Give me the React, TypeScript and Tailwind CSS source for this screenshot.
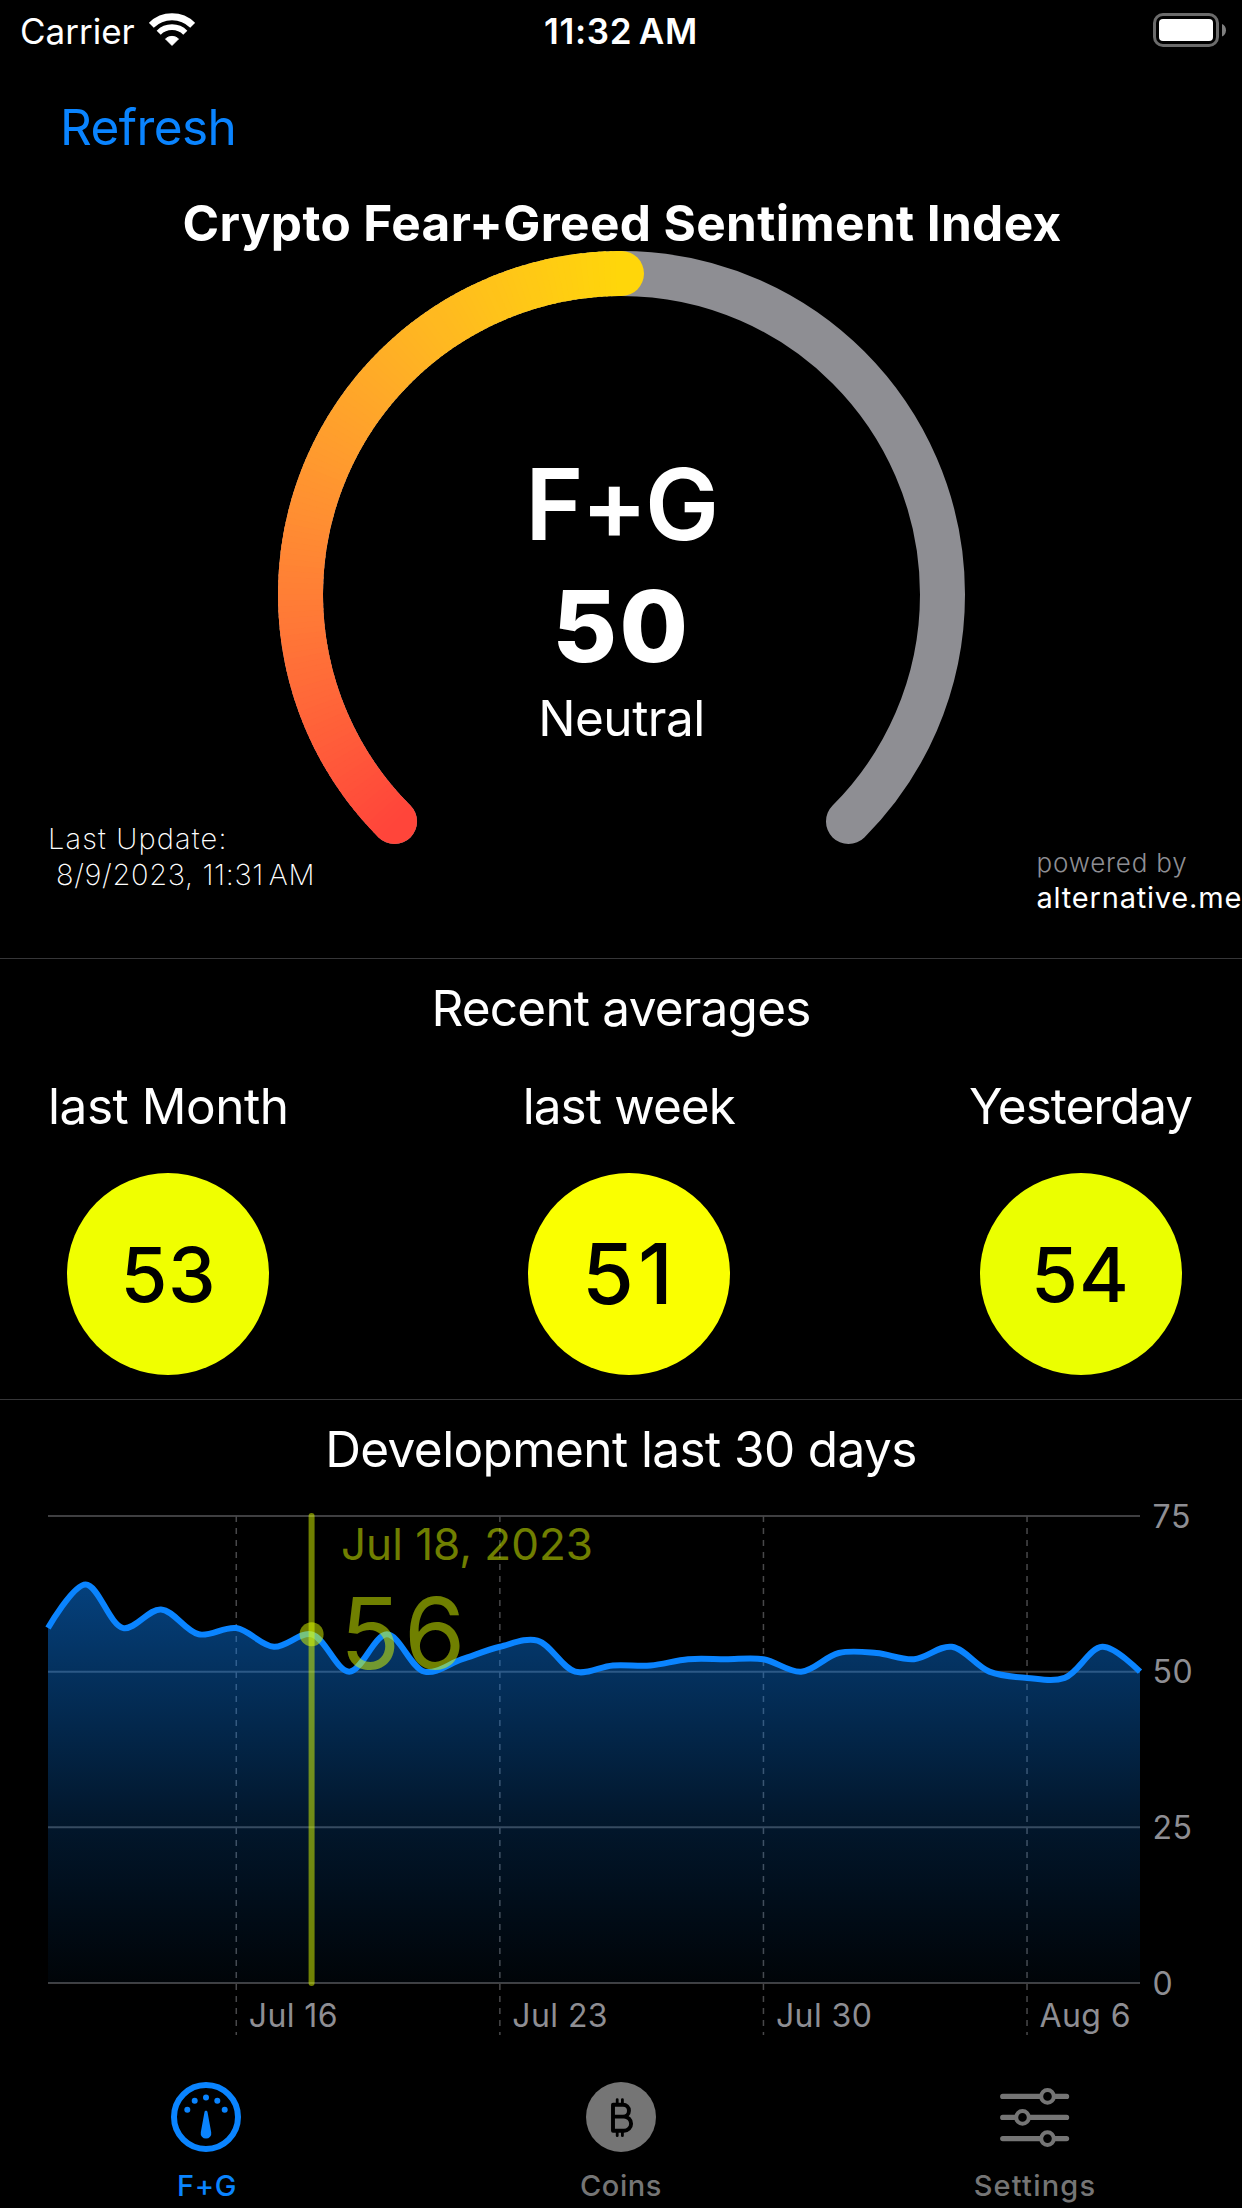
import type { ReactNode } from 'react';

const GAUGE_SIZE = 687;
const GAUGE_RADIUS = 321;
const GAUGE_START = 135;
const GAUGE_SWEEP = 270;

const history = [
    57, 64, 57, 60, 56, 57, 54, 56, 50, 56, 50, 52, 54, 55, 50, 51, 51, 52, 52, 52, 50, 53, 53, 52, 54, 50, 49, 49, 54, 50,
];

const CHART = { left: 48, right: 1140, top: 20, bottom: 487, max: 75 };

const weekTicks = [
    { index: 5, label: 'Jul 16' },
    { index: 12, label: 'Jul 23' },
    { index: 19, label: 'Jul 30' },
    { index: 26, label: 'Aug 6' },
];

const averages = [
    { label: 'last Month', value: 53, labelClass: 'tracking-[-0.45px]', circleClass: 'bg-[#f0ff00] text-[76px] tracking-[0.5px]' },
    { label: 'last week', value: 51, labelClass: 'tracking-[-0.9px]', circleClass: 'bg-[#faff00] text-[84px] tracking-[4px] pl-[1px]' },
    { label: 'Yesterday', value: 54, labelClass: 'tracking-[-1.05px]', circleClass: 'bg-[#ebff00] text-[76px] tracking-[1px]' },
];

const polar = (deg: number) => {
    const rad = (deg * Math.PI) / 180;
    const c = GAUGE_SIZE / 2;
    return [c + GAUGE_RADIUS * Math.cos(rad), c + GAUGE_RADIUS * Math.sin(rad)];
};

const arc = (from: number, to: number) => {
    const [x1, y1] = polar(from);
    const [x2, y2] = polar(to);
    return `M${x1} ${y1}A${GAUGE_RADIUS} ${GAUGE_RADIUS} 0 ${to - from > 180 ? 1 : 0} 1 ${x2} ${y2}`;
};

// red -> yellow, a little lighter halfway
const mix = (t: number) => {
    const lift = 4 * t * (1 - t);
    return `rgb(255 ${Math.round(69 + 145 * t + 10 * lift)} ${Math.round(58 - 48 * t + 13 * lift)})`;
};

const chartX = (i: number) => CHART.left + (i * (CHART.right - CHART.left)) / (history.length - 1);
const chartY = (v: number) => CHART.bottom - (v * (CHART.bottom - CHART.top)) / CHART.max;

// centripetal Catmull-Rom through all points
const smoothPath = (pts: number[][]) => {
    let d = `M${pts[0][0]} ${pts[0][1]}`;
    for (let i = 0; i < pts.length - 1; i++) {
        const p0 = pts[Math.max(i - 1, 0)];
        const p1 = pts[i];
        const p2 = pts[i + 1];
        const p3 = pts[Math.min(i + 2, pts.length - 1)];
        const dist = (a: number[], b: number[]) => Math.hypot(a[0] - b[0], a[1] - b[1]);
        const [a2, b2, c2] = [dist(p0, p1), dist(p1, p2), dist(p2, p3)];
        const [a, b, c] = [Math.sqrt(a2), Math.sqrt(b2), Math.sqrt(c2)];
        const c1 = [0, 1].map((k) =>
            a ? (p1[k] * (2 * a2 + 3 * a * b + b2) - p0[k] * b2 + p2[k] * a2) / (3 * a * (a + b)) : p1[k],
        );
        const cc = [0, 1].map((k) =>
            c ? (p2[k] * (2 * c2 + 3 * c * b + b2) + p1[k] * c2 - p3[k] * b2) / (3 * c * (c + b)) : p2[k],
        );
        d += `C${c1[0]} ${c1[1]} ${cc[0]} ${cc[1]} ${p2[0]} ${p2[1]}`;
    }
    return d;
};

const WifiIcon = () => (
    <svg className="h-[34px] w-[46px]" viewBox="0 0 46 34" fill="none" stroke="white">
        <path d="M2.3 12.3A29.3 29.3 0 0 1 43.7 12.3" strokeWidth="7" />
        <path d="M9.7 19.7A18.8 18.8 0 0 1 36.3 19.7" strokeWidth="5.8" />
        <path d="M23 32.4L16.5 25.9A9.6 9.6 0 0 1 29.5 25.9Z" fill="white" strokeWidth="1" strokeLinejoin="round" />
    </svg>
);

const BatteryIcon = () => (
    <svg className="h-[34px] w-[74px]" viewBox="0 0 74 34">
        <rect x="1.5" y="1.5" width="63" height="31" rx="8.5" fill="none" stroke="#6b6b6b" strokeWidth="3" />
        <rect x="6" y="6" width="54" height="22" rx="4" fill="white" />
        <path d="M69 11C74.3 13 74.3 21.5 69 23.5Z" fill="#7f7f7f" />
    </svg>
);

const GaugeIcon = () => (
    <svg className="mr-[2px] h-[70px] w-[70px]" viewBox="-35 -35 70 70" fill="#0a84ff">
        <circle r="32" fill="none" stroke="#0a84ff" strokeWidth="6" />
        <circle cx="-18.7" cy="-7.3" r="3" />
        <circle cx="-11.3" cy="-16.3" r="3" />
        <circle cx="0" cy="-19.6" r="3" />
        <circle cx="11.3" cy="-16.3" r="3" />
        <circle cx="18.7" cy="-7.3" r="3" />
        <path d="M-1.5 -5C-1.3 -6.6 1.3 -6.6 1.5 -5L5.2 15.3A5.3 5.3 0 1 1 -5.2 15.3Z" />
    </svg>
);

const BitcoinIcon = () => (
    <svg className="h-[70px] w-[70px]" viewBox="-35 -35 70 70">
        <circle r="35" fill="#757575" />
        <g fill="none" stroke="black" strokeLinejoin="round" strokeLinecap="round">
            <path d="M-8 -12.3H2a5.9 5.9 0 0 1 0 11.9H-8M2 -0.4H3a7 7 0 0 1 0 14.2H-8V-12.3" strokeWidth="3.9" />
            <path d="M-3.8 -17.4V-13M1.4 -17.4V-13M-3.8 14V18.7M1.4 14V18.7" strokeWidth="2.8" />
        </g>
    </svg>
);

const SlidersIcon = () => (
    <svg className="h-[70px] w-[70px]" viewBox="0 0 70 70" stroke="#757575" fill="black">
        <path d="M2.8 14.4H66.5M2.8 35.4H66.5M2.8 56.6H66.5" strokeWidth="5.4" strokeLinecap="round" />
        <circle cx="47.5" cy="14.4" r="6.3" strokeWidth="4" />
        <circle cx="22.5" cy="35.4" r="6.3" strokeWidth="4" />
        <circle cx="47.5" cy="56.6" r="6.3" strokeWidth="4" />
    </svg>
);

const StatusBar = () => (
    <div className="grid h-[60px] grid-cols-3 items-center text-[35px]">
        <div className="flex items-center gap-[14px] pl-5">
            <span className="pt-[3px] leading-none">Carrier</span>
            <WifiIcon />
        </div>
        <span className="pt-[3px] text-center leading-none font-semibold tracking-[0.7px]">
            11:32 <span className="-ml-[3px]">AM</span>
        </span>
        <div className="flex justify-end pr-[15px]">
            <BatteryIcon />
        </div>
    </div>
);

const SentimentGauge = ({ value, mood }: { value: number; mood: string }) => {
    const span = (GAUGE_SWEEP * value) / 100;
    const steps = 135;
    const [sx, sy] = polar(GAUGE_START);
    const [ex, ey] = polar(GAUGE_START + span);
    return (
        <div className="relative h-[687px] w-[687px]">
            <svg className="h-full w-full" viewBox={`0 0 ${GAUGE_SIZE} ${GAUGE_SIZE}`} fill="none" strokeWidth="45">
                <path d={arc(GAUGE_START, GAUGE_START + GAUGE_SWEEP)} stroke="#8e8e93" strokeLinecap="round" />
                <circle cx={sx} cy={sy} r="22.5" fill={mix(0)} strokeWidth="0" />
                <circle cx={ex} cy={ey} r="22.5" fill={mix(1)} strokeWidth="0" />
                {Array.from({ length: steps }, (_, i) => {
                    const from = GAUGE_START + (span * i) / steps;
                    const to = GAUGE_START + Math.min(span, (span * (i + 1.4)) / steps);
                    return <path key={i} d={arc(from, to)} stroke={mix((i + 0.5) / steps)} />;
                })}
            </svg>
            <div className="absolute inset-0 flex flex-col items-center pt-[193px]">
                <span className="text-[99px] leading-[121px] font-semibold tracking-[-2.5px]">F+G</span>
                <span className="pl-[1px] text-[99px] leading-[122px] font-extrabold tracking-[2.5px]">{value}</span>
                <span className="pl-px text-[49.5px] leading-[62px] tracking-[-0.5px]">{mood}</span>
            </div>
        </div>
    );
};

const HistoryChart = () => {
    const points = history.map((v, i) => [chartX(i), chartY(v)]);
    const line = smoothPath(points);
    const markerX = chartX(7);
    return (
        <svg className="block h-[564px] w-full" viewBox="0 0 1242 564">
            <defs>
                <linearGradient id="area" gradientUnits="userSpaceOnUse" x1="0" y1="88" x2="0" y2="487">
                    <stop offset="0" stopColor="#0a84ff" stopOpacity="0.49" />
                    <stop offset="0.22" stopColor="#0a84ff" stopOpacity="0.37" />
                    <stop offset="0.58" stopColor="#0a84ff" stopOpacity="0.18" />
                    <stop offset="1" stopColor="#0a84ff" stopOpacity="0.03" />
                </linearGradient>
            </defs>
            {[0, 25, 50, 75].map((v) => (
                <g key={v}>
                    <path d={`M${CHART.left} ${chartY(v)}H${CHART.right}`} stroke="#3f3f41" strokeWidth="2" />
                    <text x="1152.5" y={chartY(v) + 11.7} fill="#8e8e93" className="text-[32px] tracking-[0.6px]">
                        {v}
                    </text>
                </g>
            ))}
            {weekTicks.map(({ index, label }) => (
                <g key={label}>
                    <path
                        d={`M${chartX(index)} ${CHART.top}V539`}
                        stroke="#48484a"
                        strokeWidth="1.5"
                        strokeDasharray="6 6"
                    />
                    <text x={chartX(index) + 12.5} y="531" fill="#8e8e93" className="text-[32px] tracking-[0.4px]">
                        {label}
                    </text>
                </g>
            ))}
            <path d={`${line}V${CHART.bottom}H${CHART.left}Z`} fill="url(#area)" />
            <path d={line} fill="none" stroke="#0a84ff" strokeWidth="6" strokeLinejoin="round" />
            <g fill="#e0ff00" fillOpacity="0.5">
                <path
                    d={`M${markerX} ${CHART.top}V${CHART.bottom}`}
                    stroke="#e0ff00"
                    strokeOpacity="0.5"
                    strokeWidth="6"
                    strokeLinecap="round"
                />
                <circle cx={markerX} cy={chartY(56)} r="12" />
                <text x="341" y="64" className="text-[44px]">
                    Jul 18, 2023
                </text>
                <text x="340" y="172.5" className="text-[99px] tracking-[3.8px]">
                    56
                </text>
            </g>
        </svg>
    );
};

const Tab = ({ icon, label, className }: { icon: ReactNode; label: string; className: string }) => (
    <button className={`flex flex-col items-center pt-[22px] ${className}`}>
        {icon}
        <span className="mt-4 text-[29px] leading-9 font-medium">{label}</span>
    </button>
);

export default function App() {
    return (
        <main className="h-[2208px] w-[1242px] overflow-hidden bg-black font-['Inter',sans-serif] text-white">
            <StatusBar />
            <div className="flex h-[134px] items-center pt-[2px] pl-[60px]">
                <button className="text-[49.5px] leading-none tracking-[-0.6px] text-[#0a84ff]">Refresh</button>
            </div>
            <h1 className="h-[57px] pt-px pl-[2px] text-center text-[49.5px] leading-[57px] font-bold tracking-[0.36px]">
                Crypto Fear+Greed Sentiment Index
            </h1>

            <section className="grid h-[708px] grid-cols-[277.5px_687px_1fr] border-b border-[#363638]">
                <div className="pt-[570px] pl-12 text-[29px] leading-9 font-extralight whitespace-pre">
                    <p className="tracking-[1.15px]">Last Update:</p>
                    <p className="pl-[8px] tracking-[0.65px]">
                        8/9/2023, 11:31 <span className="-ml-[4px]">AM</span>
                    </p>
                </div>
                <SentimentGauge value={50} mood="Neutral" />
                <div className="pt-[594px] pl-[72px] whitespace-nowrap">
                    <p className="text-[26px] leading-[35px] font-light tracking-[0.8px] text-[#8e8e93]">powered by</p>
                    <p className="text-[29px] leading-[35px] tracking-[0.8px]">alternative.me</p>
                </div>
            </section>

            <section className="h-[441px] border-b border-[#363638]">
                <h2 className="text-center text-[49.5px] leading-[98px] tracking-[-0.8px]">Recent averages</h2>
                <div className="flex justify-between pr-[50px] pl-12">
                    {averages.map(({ label, value, labelClass, circleClass }) => (
                        <div key={label} className="flex flex-col items-center gap-[18px]">
                            <span className={`text-[49.5px] leading-[98px] ${labelClass}`}>{label}</span>
                            <span
                                className={`flex size-[202px] items-center justify-center rounded-full leading-none font-medium text-black ${circleClass}`}
                            >
                                {value}
                            </span>
                        </div>
                    ))}
                </div>
            </section>

            <section>
                <h2 className="h-24 pt-px text-center text-[49.5px] leading-[96px] tracking-[-0.6px]">
                    Development last 30 days
                </h2>
                <HistoryChart />
            </section>

            <nav className="grid grid-cols-3">
                <Tab icon={<GaugeIcon />} label="F+G" className="tracking-[0.6px] text-[#0a84ff]" />
                <Tab icon={<BitcoinIcon />} label="Coins" className="tracking-[0.6px] text-[#757575]" />
                <Tab icon={<SlidersIcon />} label="Settings" className="tracking-[1.2px] text-[#757575]" />
            </nav>
        </main>
    );
}
